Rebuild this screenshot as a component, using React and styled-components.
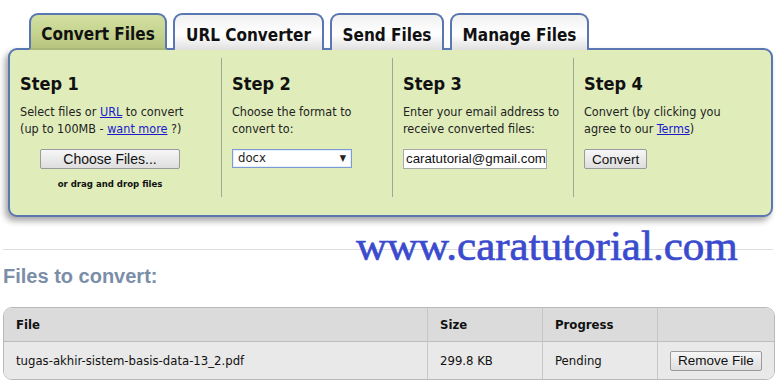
import React from 'react';
import styled, { createGlobalStyle } from 'styled-components';

const GlobalStyle = createGlobalStyle`
  body {
    margin: 0;
    background: #ffffff;
    font-family: "DejaVu Sans Condensed", "DejaVu Sans", sans-serif;
    color: #222;
  }
`;

const Page = styled.div`
  position: relative;
  width: 777px;
  height: 387px;
  overflow: hidden;
`;

const TabBar = styled.div`
  display: flex;
  gap: 6px;
  padding: 13px 0 0 29px;
  position: relative;
  z-index: 2;
  margin-bottom: -2px;
`;

const Tab = styled.div`
  width: ${({ w }) => w}px;
  height: 37px;
  box-sizing: border-box;
  display: flex;
  align-items: center;
  justify-content: center;
  padding-top: 5px;
  border: 2px solid #5a77b2;
  border-bottom: ${({ active }) => (active ? '2px solid #a9b777' : 'none')};
  border-radius: 9px 9px 0 0;
  font-weight: bold;
  font-size: 17px;
  color: #111;
  background: ${({ active }) =>
    active
      ? 'linear-gradient(#d3e0a2, #c4d28d 60%, #b6c47e)'
      : 'linear-gradient(#f1f1f1, #ffffff 55%, #e0e0e0)'};
`;

const Panel = styled.div`
  margin-left: 8px;
  width: 765px;
  height: 169px;
  box-sizing: border-box;
  border: 2px solid #5a77b2;
  border-radius: 9px;
  background: #e0edbb;
  box-shadow: -3px 4px 6px rgba(0, 0, 0, 0.35);
  padding: 8px 0 18px;
  display: grid;
  grid-template-columns: 211px 171px 181px 1fr;
  position: relative;
  z-index: 1;
`;

const Step = styled.div`
  padding: 16px 0 0 10px;
  border-left: ${({ first }) => (first ? 'none' : '1px solid #a2a59a')};
  font-size: 12.5px;
  line-height: 16.5px;
`;

const StepTitle = styled.div`
  font-weight: bold;
  font-size: 18px;
  line-height: 20px;
  margin-bottom: 10px;
  color: #111;
`;

const Link = styled.a`
  color: #1a1acc;
  text-decoration: underline;
`;

const Center = styled.div`
  width: 180px;
  display: flex;
  flex-direction: column;
  align-items: center;
  margin-top: 12px;
`;

const Button = styled.button`
  height: 20px;
  width: ${({ w }) => (w ? `${w}px` : 'auto')};
  padding: 0 ${({ px }) => (px !== undefined ? px : 6)}px;
  border: 1px solid #9a9a9a;
  border-radius: 2px;
  background: linear-gradient(#f6f6f6, #dedede);
  font-family: "Liberation Sans", Arial, sans-serif;
  font-size: ${({ fs }) => fs || 13.5}px;
  color: #111;
`;

const Hint = styled.div`
  font-size: 9.5px;
  font-weight: bold;
  margin-top: 7px;
  color: #111;
`;

const Select = styled.div`
  margin-top: 12px;
  width: 120px;
  height: 19px;
  box-sizing: border-box;
  border: 1px solid #7b9bd3;
  background: #fff;
  display: flex;
  align-items: center;
  justify-content: space-between;
  padding: 0 5px;
  font-size: 13px;
  box-shadow: inset 0 0 0 1px #e6eefb;
`;

const Arrow = styled.span`
  font-size: 9px;
`;

const Input = styled.div`
  margin-top: 12px;
  width: 144px;
  height: 20px;
  box-sizing: border-box;
  border: 1px solid #a9a9a9;
  background: #fff;
  padding: 0 0 0 2px;
  display: flex;
  align-items: center;
  font-family: "Liberation Sans", Arial, sans-serif;
  font-size: 13.3px;
  color: #111;
`;

const ButtonRow = styled.div`
  margin-top: 12px;
`;

const Divider = styled.div`
  margin: 32px 4px 0 3px;
  border-top: 1px solid #dcdcdc;
`;

const SectionTitle = styled.h2`
  margin: 15px 0 0 3px;
  font-family: "Liberation Sans", Arial, sans-serif;
  font-size: 20px;
  font-weight: bold;
  color: #7b8ea7;
`;

const Table = styled.div`
  margin: 19px 0 0 3px;
  width: 770px;
  border: 1px solid #b9b9b9;
  border-radius: 9px;
  overflow: hidden;
  display: grid;
  grid-template-columns: 423px 115px 115px 1fr;
  font-size: 13px;
`;

const Cell = styled.div`
  height: ${({ head }) => (head ? 33 : 37)}px;
  display: flex;
  align-items: center;
  padding-left: 12px;
  background: ${({ head }) => (head ? '#dbdbdb' : '#e9e9e9')};
  font-weight: ${({ head }) => (head ? 'bold' : 'normal')};
  border-left: ${({ first }) => (first ? 'none' : '1px solid #c6c6c6')};
  border-bottom: ${({ head }) => (head ? '1px solid #bdbdbd' : 'none')};
  color: #111;
`;

const Watermark = styled.div`
  position: absolute;
  left: 356px;
  top: 221px;
  font-family: "Liberation Serif", "Times New Roman", serif;
  font-size: 43px;
  color: #3b4bcd;
  -webkit-text-stroke: 0.7px #3b4bcd;
  white-space: nowrap;
`;

export default function App() {
  return (
    <Page>
      <GlobalStyle />
      <TabBar>
        <Tab active w={138}>Convert Files</Tab>
        <Tab w={151}>URL Converter</Tab>
        <Tab w={114}>Send Files</Tab>
        <Tab w={139}>Manage Files</Tab>
      </TabBar>
      <Panel>
        <Step first>
          <StepTitle>Step 1</StepTitle>
          Select files or <Link>URL</Link> to convert
          <br />
          (up to 100MB - <Link>want more</Link> ?)
          <Center>
            <Button w={140} fs={14}>Choose Files...</Button>
            <Hint>or drag and drop files</Hint>
          </Center>
        </Step>
        <Step>
          <StepTitle>Step 2</StepTitle>
          Choose the format to
          <br />
          convert to:
          <Select>
            docx <Arrow>▼</Arrow>
          </Select>
        </Step>
        <Step>
          <StepTitle>Step 3</StepTitle>
          Enter your email address to
          <br />
          receive converted files:
          <Input>caratutorial@gmail.com</Input>
        </Step>
        <Step>
          <StepTitle>Step 4</StepTitle>
          Convert (by clicking you
          <br />
          agree to our <Link>Terms</Link>)
          <ButtonRow>
            <Button px={7}>Convert</Button>
          </ButtonRow>
        </Step>
      </Panel>
      <Divider />
      <SectionTitle>Files to convert:</SectionTitle>
      <Table>
        <Cell head first>File</Cell>
        <Cell head>Size</Cell>
        <Cell head>Progress</Cell>
        <Cell head />
        <Cell first>tugas-akhir-sistem-basis-data-13_2.pdf</Cell>
        <Cell>299.8 KB</Cell>
        <Cell>Pending</Cell>
        <Cell>
          <Button px={7}>Remove File</Button>
        </Cell>
      </Table>
      <Watermark>www.caratutorial.com</Watermark>
    </Page>
  );
}
